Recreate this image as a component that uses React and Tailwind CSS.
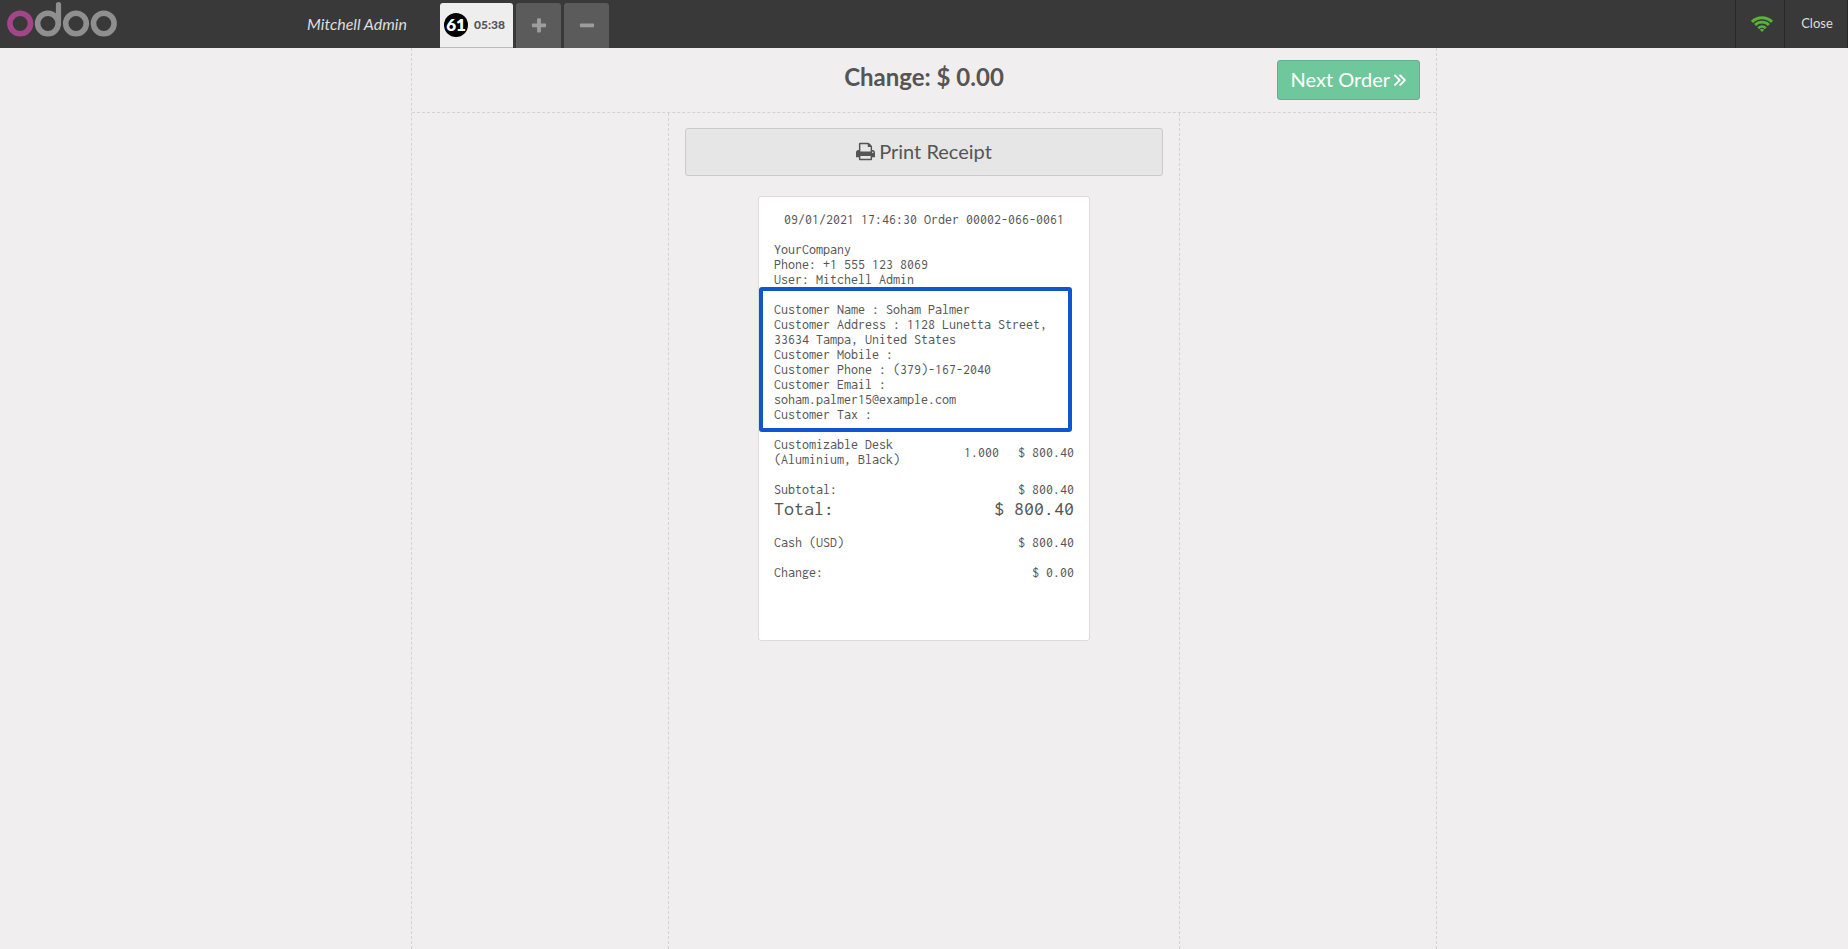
function OdooLogo() {
  return (
    <svg width="110" height="36" viewBox="7 2 110 36" fill="none" strokeWidth="5.6" aria-label="odoo" role="img">
      <circle cx="20.2" cy="23.5" r="10.3" stroke="#a24689" />
      <g stroke="#8f8f8f">
        <circle cx="47.9" cy="23.5" r="10.3" />
        <circle cx="76" cy="23.5" r="10.3" />
        <circle cx="103.8" cy="23.5" r="10.3" />
        <path d="M58.5 4.6V24" strokeWidth="5.2" strokeLinecap="round" />
      </g>
    </svg>
  );
}

function PlusIcon() {
  return (
    <svg width="18" height="18" viewBox="0 0 1792 1792" fill="currentColor" aria-hidden="true">
      <path d="M1600 736v192q0 40-28 68t-68 28h-416v416q0 40-28 68t-68 28h-192q-40 0-68-28t-28-68v-416h-416q-40 0-68-28t-28-68v-192q0-40 28-68t68-28h416v-416q0-40 28-68t68-28h192q40 0 68 28t28 68v416h416q40 0 68 28t28 68z" />
    </svg>
  );
}

function MinusIcon() {
  return (
    <svg width="18" height="18" viewBox="0 0 1792 1792" fill="currentColor" aria-hidden="true">
      <path d="M1600 736v192q0 40-28 68t-68 28h-1216q-40 0-68-28t-28-68v-192q0-40 28-68t68-28h1216q40 0 68 28t28 68z" />
    </svg>
  );
}

function WifiIcon() {
  return (
    <svg width="24" height="16" viewBox="0 0 24 16" fill="none" stroke="#57b531" strokeWidth="3.1" aria-label="Connected" role="img">
      <path d="M2 5.9a14.2 14.2 0 0 1 20 0" />
      <path d="M5.1 9a9.8 9.8 0 0 1 13.800 0" strokeWidth="2.900" />
      <path d="M8.300 12.200a5.300 5.300 0 0 1 7.400 0" strokeWidth="2.700" />
      <path d="M12 16l-2.100-2.200a3 3 0 0 1 4.200 0z" fill="#57b531" stroke="none" />
    </svg>
  );
}

function PrinterIcon() {
  return (
    <svg width="19" height="22" viewBox="0 -111 1664 1927" fill="currentColor" aria-hidden="true">
      <path d="M384 1536h896v-256h-896v256zM384 896h896v-384h-160q-40 0-68-28t-28-68v-160h-640v640zM1536 960q0-26-19-45t-45-19-45 19-19 45 19 45 45 19 45-19 19-45zM1664 960v416q0 13-9.500 22.500t-22.500 9.500h-224v160q0 40-28 68t-68 28h-960q-40 0-68-28t-28-68v-160h-224q-13 0-22.500-9.500t-9.500-22.500v-416q0-79 56.500-135.500t135.500-56.500h64v-544q0-40 28-68t68-28h672q40 0 88 20t76 48l152 152q28 28 48 76t20 88v256h64q79 0 135.500 56.500t56.500 135.500z" />
    </svg>
  );
}

function DoubleAngleIcon() {
  return (
    <svg width="12" height="16" viewBox="0 0 12 16" fill="none" stroke="currentColor" strokeWidth="1.900" strokeLinecap="round" strokeLinejoin="round" aria-hidden="true">
      <path d="M1 4.500l4.700 4.700L1 13.900M6.200 4.500l4.700 4.700-4.700 4.700" />
    </svg>
  );
}

const customer = [
  ["Customer Name", "Soham Palmer"],
  ["Customer Address", "1128 Lunetta Street, 33634 Tampa, United States"],
  ["Customer Mobile", ""],
  ["Customer Phone", "(379)-167-2040"],
  ["Customer Email", "soham.palmer15@example.com"],
  ["Customer Tax", ""],
];

function Receipt() {
  return (
    <article className="mx-auto mt-5 w-[332px] rounded-[3px] border border-[#dcdcdc] bg-white px-[15px] pt-[15px] pb-[60px] text-left font-['Inconsolata','Noto_Sans_Mono_CJK_SC','Liberation_Mono',monospace] text-[14px] leading-[15px]">
      <p className="text-center">09/01/2021 17:46:30 Order 00002-066-0061</p>
      <div className="mt-[15px]">
        <p>YourCompany</p>
        <p>Phone: +1 555 123 8069</p>
        <p>User: Mitchell Admin</p>
      </div>
      <div className="relative mt-[15px]">
        {customer.map(([label, value]) => (
          <p key={label}>{`${label} : ${value}`}</p>
        ))}
        <div className="pointer-events-none absolute -top-[15px] -bottom-[10px] -left-[15px] right-[2px] rounded-[3px] border-4 border-[#1155cc]" />
      </div>
      <table className="mt-[15px] w-full">
        <tbody>
          <tr>
            <td className="w-1/2">Customizable Desk (Aluminium, Black)</td>
            <td className="w-1/4 text-right">1.000</td>
            <td className="w-1/4 text-right">$ 800.40</td>
          </tr>
        </tbody>
      </table>
      <table className="mt-[15px] w-full">
        <tbody>
          <tr>
            <td>Subtotal:</td>
            <td className="text-right">$ 800.40</td>
          </tr>
          <tr className="text-[20px] leading-[23px]">
            <td>Total:</td>
            <td className="text-right">$ 800.40</td>
          </tr>
        </tbody>
      </table>
      <table className="mt-[15px] w-full">
        <tbody>
          <tr>
            <td>Cash (USD)</td>
            <td className="text-right">$ 800.40</td>
          </tr>
          <tr>
            <td className="pt-[15px]">Change:</td>
            <td className="pt-[15px] text-right">$ 0.00</td>
          </tr>
        </tbody>
      </table>
    </article>
  );
}

export default function App() {
  return (
    <div className="flex min-h-screen flex-col bg-[#f0eeee] font-['Lato',sans-serif] text-[#555555]">
      <header className="flex h-12 bg-[#393939] text-[#dddddd]">
        <div className="flex w-[440px] items-start justify-between pt-[2px] pr-[33px] pl-[7px]">
          <OdooLogo />
          <span className="pt-[10px] text-[16px] leading-6 italic">Mitchell Admin</span>
        </div>
        <div className="flex flex-1 items-stretch gap-[3px] pt-[3px]">
          <button className="flex w-[73px] items-center gap-[6px] rounded-t-[3px] border-b border-[#bbbbbb] bg-[#eeeeee] pl-1 text-[#555555]">
            <span className="flex size-6 items-center justify-center rounded-full bg-black text-[17px] font-extrabold text-white">61</span>
            <span className="pb-px text-[12px] font-black">05:38</span>
          </button>
          <button aria-label="New order" className="flex w-[45px] items-center justify-center rounded-t-[3px] bg-[#5b5b5b] text-[#9d9d9d]">
            <PlusIcon />
          </button>
          <button aria-label="Delete order" className="flex w-[45px] items-center justify-center rounded-t-[3px] bg-[#5b5b5b] text-[#9d9d9d]">
            <MinusIcon />
          </button>
        </div>
        <div className="flex w-[49px] items-center justify-center border-l border-[#292929] pl-[3px]">
          <WifiIcon />
        </div>
        <button className="w-16 border-x border-[#292929] pl-[2px] text-[13px]">Close</button>
      </header>
      <main className="mx-auto flex w-full max-w-[1026px] flex-1 flex-col border-x border-dashed border-[#d3d3d3]">
        <div className="grid h-[65px] grid-cols-3 items-start border-b border-dashed border-[#d3d3d3]">
          <h1 className="col-start-2 pt-[14px] text-center text-[24px] leading-[30px] font-bold">Change: $ 0.00</h1>
          <button className="mt-3 mr-4 flex h-10 items-center gap-1 justify-self-end rounded-[3px] border border-[#64af8a] bg-[#6ec89b] px-[13px] pb-[2px] text-[20px] text-white">
            Next Order
            <DoubleAngleIcon />
          </button>
        </div>
        <section className="mx-auto w-1/2 flex-1 border-x border-dashed border-[#d3d3d3] px-4 pt-[15px] pb-4">
          <button className="flex h-12 w-full items-center justify-center gap-1 rounded-[3px] border border-[#cccccc] bg-[#e6e6e6] pb-[2px] text-[20px]">
            <PrinterIcon />
            Print Receipt
          </button>
          <Receipt />
        </section>
      </main>
    </div>
  );
}
